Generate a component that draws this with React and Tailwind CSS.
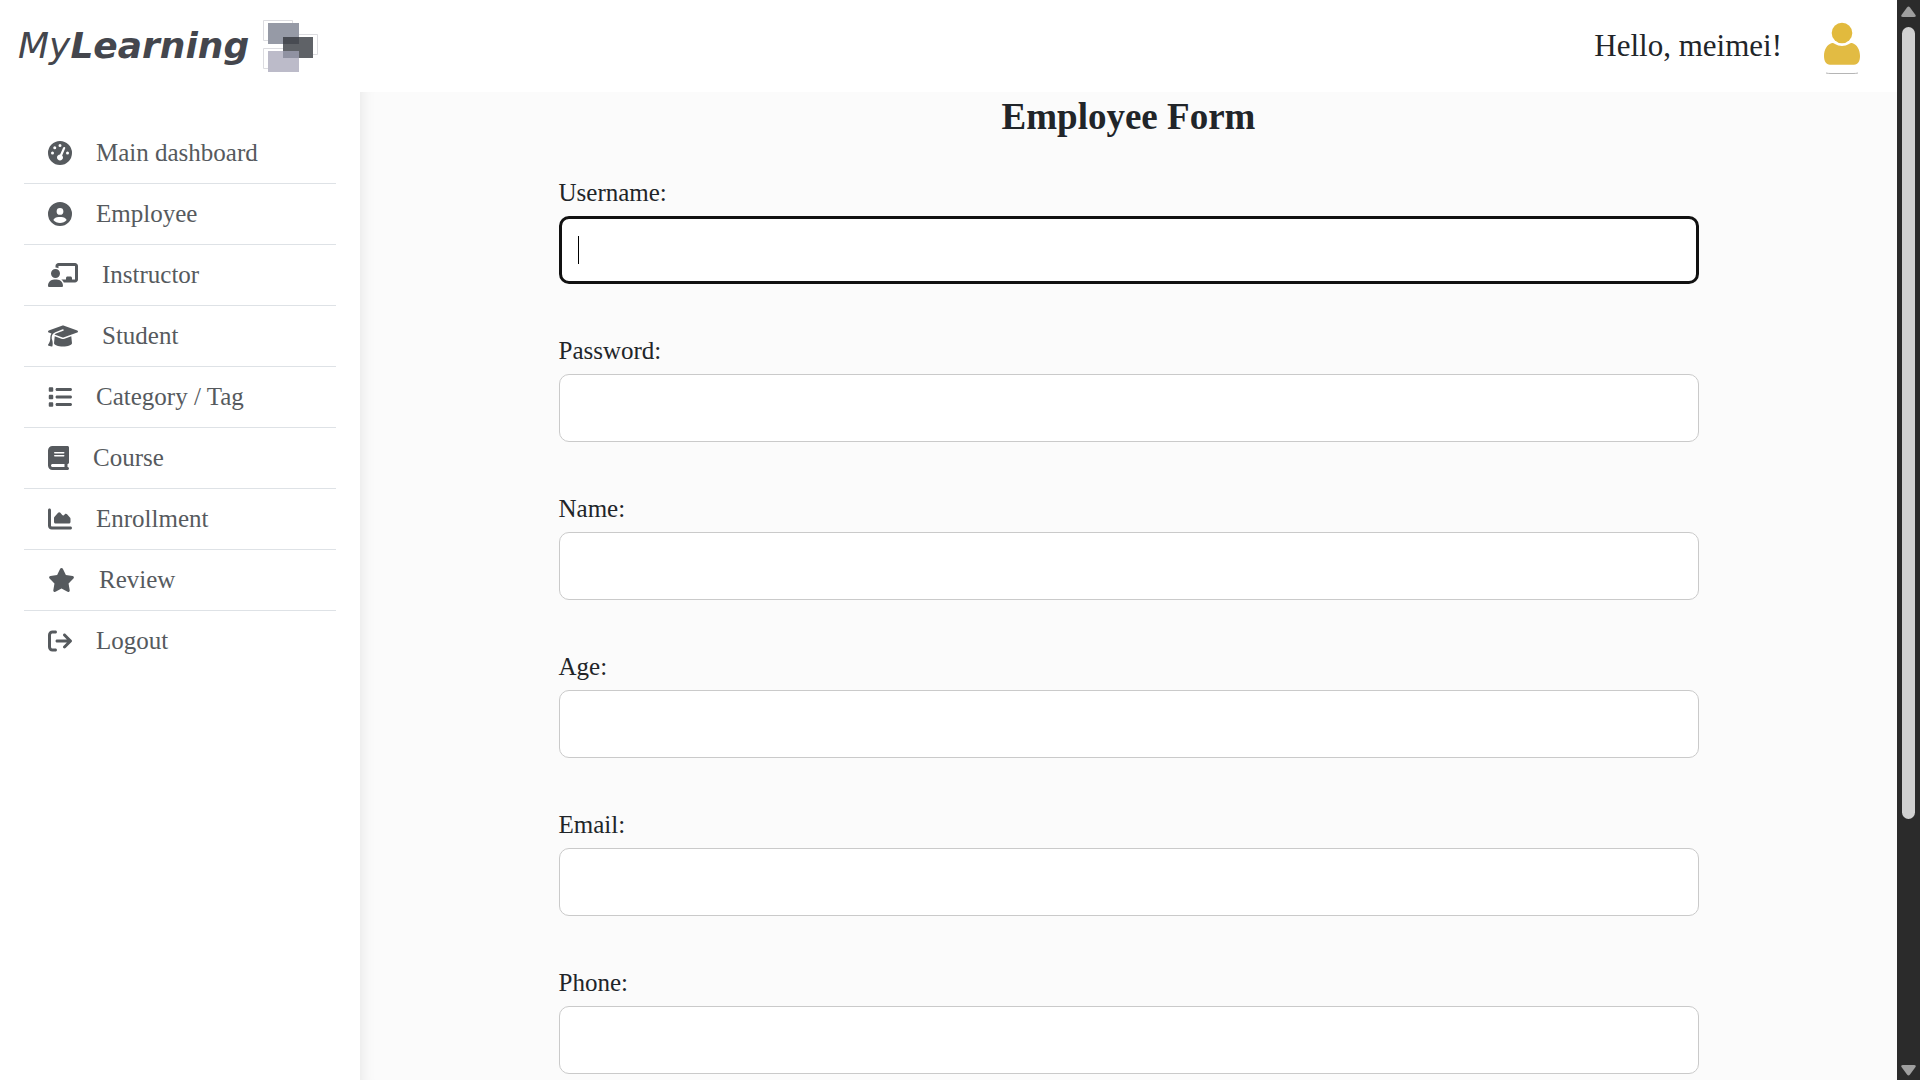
import {
  FaGaugeHigh, FaCircleUser, FaChalkboardUser, FaGraduationCap, FaList,
  FaBook, FaChartArea, FaStar, FaArrowRightFromBracket,
} from "react-icons/fa6";

const navItems = [
  { label: "Main dashboard", Icon: FaGaugeHigh, width: "w-6" },
  { label: "Employee", Icon: FaCircleUser, width: "w-6" },
  { label: "Instructor", Icon: FaChalkboardUser, width: "w-[30px]" },
  { label: "Student", Icon: FaGraduationCap, width: "w-[30px]" },
  { label: "Category / Tag", Icon: FaList, width: "w-6" },
  { label: "Course", Icon: FaBook, width: "w-[21px]" },
  { label: "Enrollment", Icon: FaChartArea, width: "w-6" },
  { label: "Review", Icon: FaStar, width: "w-[27px]" },
  { label: "Logout", Icon: FaArrowRightFromBracket, width: "w-6" },
];

const fields = [
  { id: "username", label: "Username:", type: "text" },
  { id: "password", label: "Password:", type: "password" },
  { id: "name", label: "Name:", type: "text" },
  { id: "age", label: "Age:", type: "text" },
  { id: "email", label: "Email:", type: "email" },
  { id: "phone", label: "Phone:", type: "tel" },
];

function Logo() {
  return (
    <a href="#" className="flex items-center gap-3.5 text-[#44464d]">
      <span className="font-['DejaVu_Sans',sans-serif] text-[36px] leading-none italic">
        My<b>Learning</b>
      </span>
      <svg viewBox="0 0 56 54" className="h-[54px] w-14" aria-hidden="true">
        <g fill="none" stroke="#dcdce0">
          <path d="M.5 1.500h29v20H.5z" />
          <path d="M.5 29.500h29v20H.5z" />
          <path d="M25.500 15.500h29v20h-29z" />
        </g>
        <path fill="#969aa6" d="M5 4h31v21H5z" />
        <path fill="#bcbbc9" d="M5 32h31v21H5z" />
        <path fill="#5f6267" d="M20 18h30v21H20z" />
        <path fill="#484b52" d="M20 18h16v7H20z" />
        <path fill="#9092a2" d="M20 32h16v7H20z" />
      </svg>
    </a>
  );
}

function Avatar() {
  return (
    <svg viewBox="0 0 40 56" className="h-14 w-10" aria-hidden="true">
      <circle cx="20" cy="15" r="10.300" fill="#e2ba3d" />
      <path fill="#e2bb43" d="M10 25c1-.3 2 .3 3 1 4 2.500 10 2.500 14 0 1-.7 2-1.300 3-1 5 1.500 8 6.500 8 13 0 5-2 8.700-6 8.700H8c-4 0-6-3.700-6-8.700 0-6.500 3-11.500 8-13z" />
      <path d="M4 55q2 .5 5 .5h22q3 0 5-.5" fill="none" stroke="#b5b5b5" />
    </svg>
  );
}

export default function App() {
  return (
    <div className="flex h-screen overflow-hidden bg-white font-['Liberation_Serif',serif] text-[#212529]">
      <div className="flex min-w-0 flex-1 flex-col">
        <header className="flex h-[92px] shrink-0 items-center justify-between pr-[35px] pl-[18px]">
          <Logo />
          <div className="flex items-center gap-10">
            <span className="text-[31px]">Hello, meimei!</span>
            <Avatar />
          </div>
        </header>
        <div className="flex min-h-0 flex-1">
          <nav className="w-[360px] shrink-0 px-6 pt-[31px]">
            <ul className="divide-y divide-[#dee2e6]">
              {navItems.map(({ label, Icon, width }) => (
                <li key={label}>
                  <a href="#" className="flex h-15 items-center gap-6 px-6 text-[25px] text-[#565a5e]">
                    <Icon className={`h-6 ${width}`} />
                    <span>{label}</span>
                  </a>
                </li>
              ))}
            </ul>
          </nav>
          <main className="flex-1 overflow-hidden bg-[#fbfbfb] shadow-[inset_16px_0_16px_-16px_rgba(0,0,0,0.1)]">
            <form className="mx-auto flex max-w-[1140px] flex-col">
              <h1 className="mb-9 pt-[3px] text-center text-[37px] leading-[44px] font-bold">Employee Form</h1>
              {fields.map(({ id, label, type }, i) => (
                <div key={id} className="relative mb-[49px] flex flex-col">
                  <label htmlFor={id} className="mb-[5px] text-[25px] leading-9">{label}</label>
                  <input
                    id={id}
                    type={type}
                    autoFocus={i === 0}
                    className="h-17 rounded-[10px] border border-[#cacaca] bg-white px-5 text-[25px] caret-transparent outline-none focus:border-[3px] focus:border-[#111]"
                  />
                  {i === 0 && <span className="absolute bottom-5 left-[19px] h-7 w-px bg-black" />}
                </div>
              ))}
            </form>
          </main>
        </div>
      </div>
      <div className="flex w-[23px] shrink-0 flex-col items-center justify-between bg-[#2b2b2b] pt-1.5 pb-1" aria-hidden="true">
        <svg viewBox="0 0 15 12" className="h-3 w-[15px]"><path fill="#9f9f9f" d="M6 1.500q1.500-2 3 0l5.500 7.500q1 2-1.500 2H2q-2.500 0-1.500-2z" /></svg>
        <div className="mt-[9px] mb-auto h-[74%] w-[13px] rounded-full bg-[#d1d1d1]" />
        <svg viewBox="0 0 15 12" className="h-3 w-[15px] rotate-180"><path fill="#9f9f9f" d="M6 1.500q1.500-2 3 0l5.500 7.500q1 2-1.500 2H2q-2.500 0-1.500-2z" /></svg>
      </div>
    </div>
  );
}
